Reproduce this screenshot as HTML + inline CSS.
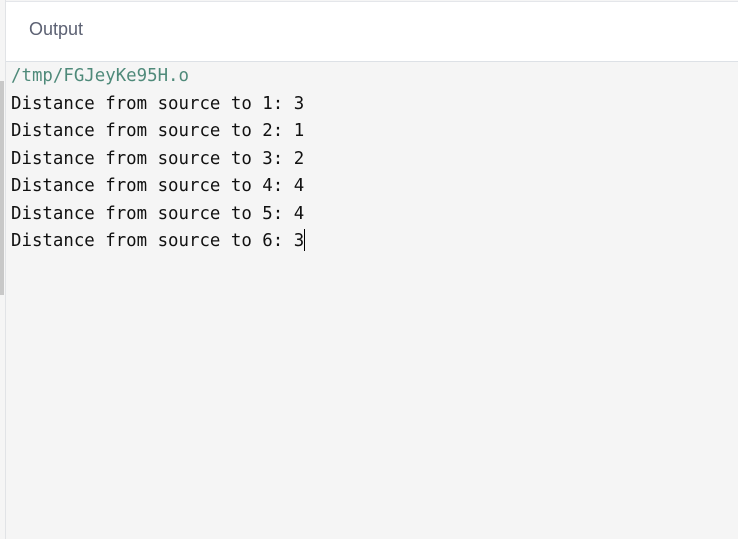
<!DOCTYPE html>
<html><head><meta charset="utf-8"><style>
html,body{margin:0;padding:0;width:738px;height:539px;overflow:hidden;background:#f5f5f5;}
.hdr{position:absolute;left:6px;top:1px;width:732px;height:59px;background:#fff;border-top:1px solid #e4e6ea;border-bottom:1px solid #dde1e6;}
.hdr span{position:absolute;left:23px;top:17px;font:18px "Liberation Sans",sans-serif;color:#5c6173;}
.lb{position:absolute;left:5px;top:0;width:1px;height:539px;background:#e1e3e6;}
.sb{position:absolute;left:0;top:81px;width:4px;height:214px;background:#c8c8c8;}
.out{position:absolute;left:11px;top:63px;font:17.4px/27.5px "DejaVu Sans Mono","Liberation Mono",monospace;color:#111;white-space:pre;}
.p{color:#4f8a7a;}
.c{display:inline-block;width:1px;height:22px;background:#000;vertical-align:-5px;}
</style></head><body>
<div class="lb"></div>
<div class="hdr"><span>Output</span></div>
<div class="sb"></div>
<div class="out"><span class="p">/tmp/FGJeyKe95H.o</span>
Distance from source to 1: 3
Distance from source to 2: 1
Distance from source to 3: 2
Distance from source to 4: 4
Distance from source to 5: 4
Distance from source to 6: 3<span class="c"></span></div>
</body></html>
